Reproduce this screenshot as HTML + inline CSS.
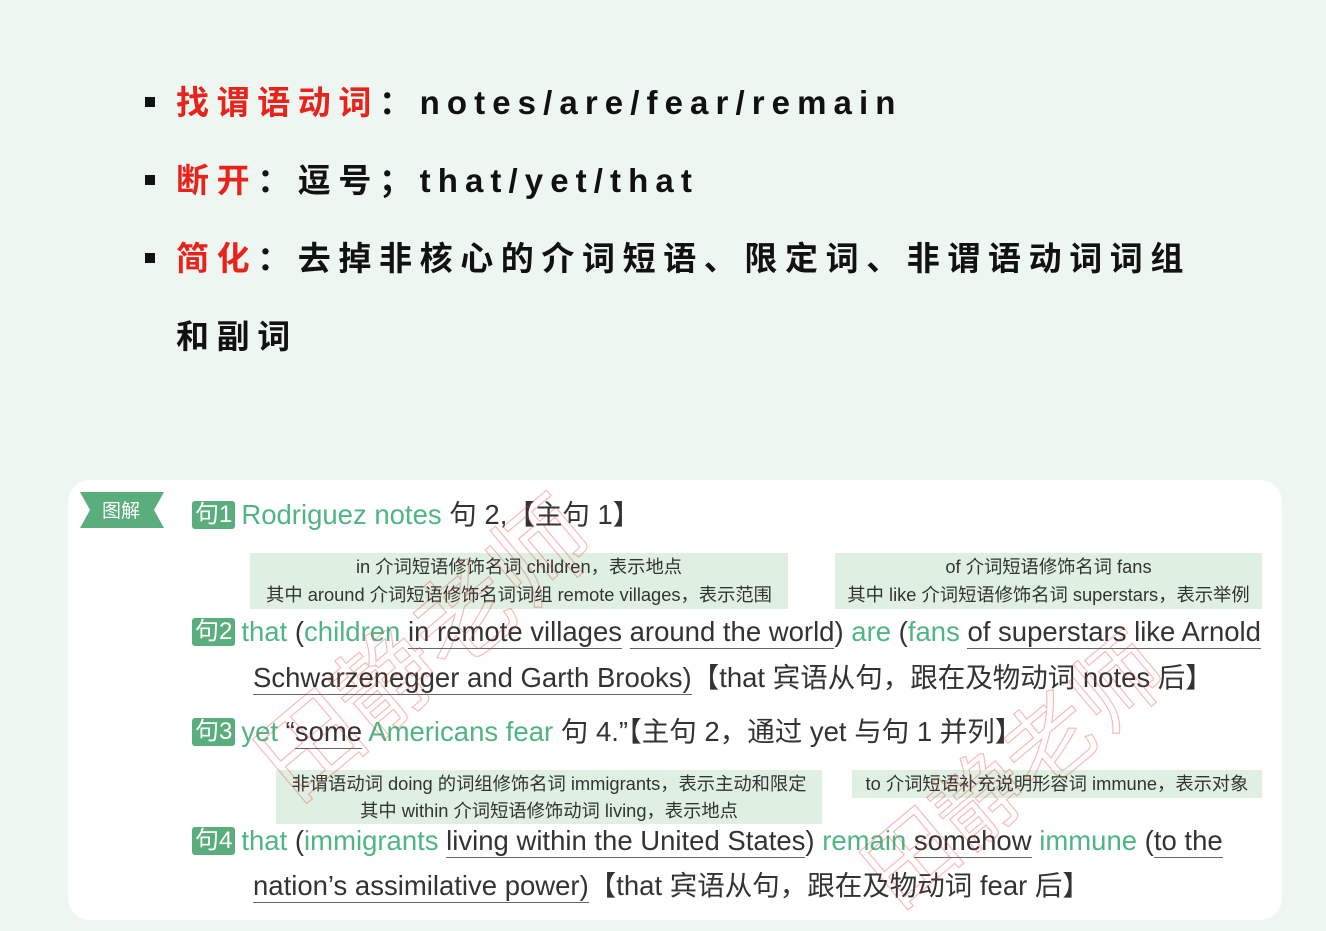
<!DOCTYPE html>
<html><head><meta charset="utf-8"><style>
body{margin:0;width:1326px;height:908px;background:#eef6f2;font-family:"Liberation Sans","Noto Sans CJK SC",sans-serif;position:relative;overflow:hidden;color:#222}
.a{position:absolute;white-space:nowrap}
.b{font-weight:bold;font-size:33px;letter-spacing:7.6px;color:#111}
.l{letter-spacing:7.1px}
.sq{position:absolute;width:10px;height:10px;background:#111;left:145px}
.r{color:#e8231b}
.card{position:absolute;left:68px;top:480px;width:1214px;height:440px;background:#fff;border-radius:22px}
.g{color:#4fb583}
.tag{display:inline-block;background:#5aae7d;color:#fff;font-size:24px;padding:0 3px;line-height:28px;border-radius:3px;margin-right:6px;vertical-align:2px}
.s{font-size:27.5px;color:#333}
.c{font-size:29px}
.u{border-bottom:1.5px solid #666;padding-bottom:1px}
.note{position:absolute;background:#dff0e2;font-size:18.3px;color:#333;text-align:center;line-height:28px}
</style></head><body>
<div class="sq" style="top:97px"></div>
<div class="a b" style="left:176px;top:76px"><span class="r">找谓语动词</span>：<span class="l">notes/are/fear/remain</span></div>
<div class="sq" style="top:175px"></div>
<div class="a b" style="left:176px;top:154px"><span class="r">断开</span>：逗号；<span class="l">that/yet/that</span></div>
<div class="sq" style="top:253px"></div>
<div class="a b" style="left:176px;top:232px"><span class="r">简化</span>：去掉非核心的介词短语、限定词、非谓语动词词组</div>
<div class="a b" style="left:176px;top:310px">和副词</div>
<div class="card"></div>
<svg class="a" style="left:80px;top:492px" width="84" height="36"><polygon points="0,0 84,0 74,18 84,36 0,36 10,18" fill="#5aae7d"/><text x="22" y="25" fill="#fff" font-size="19" font-family="Noto Sans CJK SC">图解</text></svg>
<div class="a s" style="left:192px;top:492px"><span class="tag">句1</span><span class="g">Rodriguez notes</span> 句 2,【主句 1】</div>
<div class="note" style="left:250px;top:553px;width:538px;height:56px">in 介词短语修饰名词 children，表示地点<br>其中 around 介词短语修饰名词词组 remote villages，表示范围</div>
<div class="note" style="left:835px;top:553px;width:427px;height:56px">of 介词短语修饰名词 fans<br>其中 like 介词短语修饰名词 superstars，表示举例</div>
<div class="a s" style="left:192px;top:616px"><span class="tag">句2</span><span class="g">that</span> (<span class="g">children</span> <span class="u">in remote villages</span> <span class="u">around the world</span>) <span class="g">are</span> (<span class="g">fans</span> <span class="u">of superstars like Arnold</span></div>
<div class="a s" style="left:253px;top:655px"><span class="u">Schwarzenegger and Garth Brooks)</span>【that 宾语从句，跟在及物动词 notes 后】</div>
<div class="a s" style="left:192px;top:709px"><span class="tag">句3</span><span class="g">yet</span> “<span class="u">some</span> <span class="g">Americans fear</span> 句 4.”【主句 2，通过 yet 与句 1 并列】</div>
<div class="note" style="left:276px;top:770px;width:546px;height:54px;line-height:27px">非谓语动词 doing 的词组修饰名词 immigrants，表示主动和限定<br>其中 within 介词短语修饰动词 living，表示地点</div>
<div class="note" style="left:852px;top:770px;width:410px;height:28px">to 介词短语补充说明形容词 immune，表示对象</div>
<div class="a s" style="left:192px;top:825px"><span class="tag">句4</span><span class="g">that</span> (<span class="g">immigrants</span> <span class="u">living within the United States</span>) <span class="g">remain</span> <span class="u">somehow</span> <span class="g">immune</span> (<span class="u">to the</span></div>
<div class="a s" style="left:253px;top:863px"><span class="u">nation’s assimilative power)</span>【that 宾语从句，跟在及物动词 fear 后】</div>
<div class="a" style="left:220px;top:570px;font-size:100px;color:transparent;-webkit-text-stroke:1.2px rgba(232,60,50,0.35);transform:rotate(-40deg);font-family:'Noto Sans CJK SC'">田静老师</div>
<div class="a" style="left:830px;top:700px;font-size:90px;color:transparent;-webkit-text-stroke:1.2px rgba(232,60,50,0.35);transform:rotate(-40deg);font-family:'Noto Sans CJK SC'">田静老师</div>
</body></html>
